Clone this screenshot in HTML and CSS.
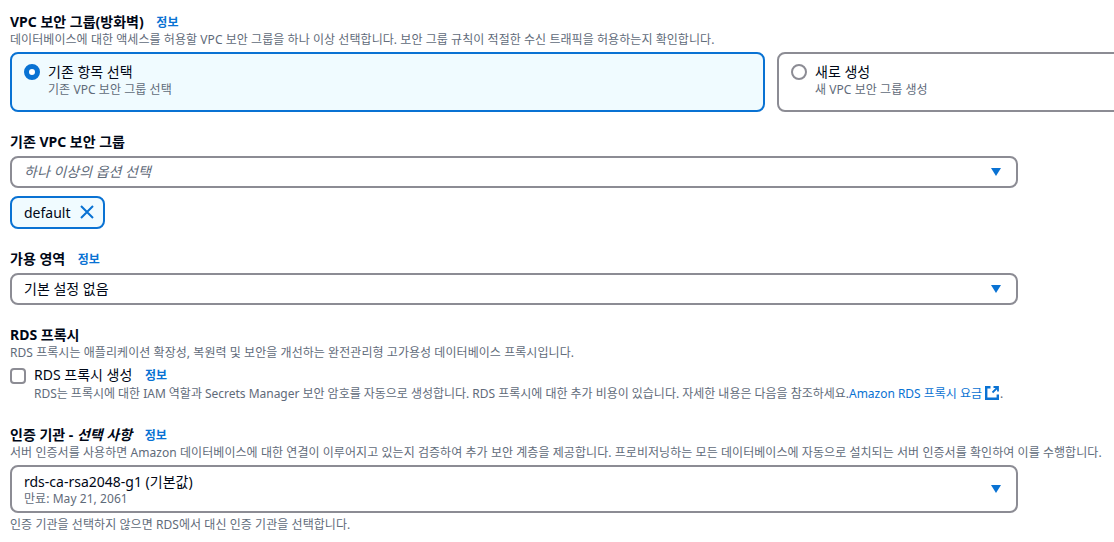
FILE: index.html
```html
<!DOCTYPE html>
<html lang="ko">
<head>
    <meta charset="UTF-8">
    <meta name="viewport" content="width=device-width, initial-scale=1.0">
    <title>VPC 보안 그룹</title>
    <link rel="stylesheet" href="styles.css">
</head>
<body>
    <div class="form">
        <section class="field field-vpc">
            <div class="label">VPC 보안 그룹(방화벽) <a class="info" href="#">정보</a></div>
            <div class="desc">데이터베이스에 대한 액세스를 허용할 VPC 보안 그룹을 하나 이상 선택합니다. 보안 그룹 규칙이 적절한 수신 트래픽을 허용하는지 확인합니다.</div>
            <div class="tiles">
                <div class="tile tile-on">
                    <span class="radio radio-on"></span>
                    <div>
                        <div class="tile-title">기존 항목 선택</div>
                        <div class="tile-sub">기존 VPC 보안 그룹 선택</div>
                    </div>
                </div>
                <div class="tile">
                    <span class="radio"></span>
                    <div>
                        <div class="tile-title">새로 생성</div>
                        <div class="tile-sub">새 VPC 보안 그룹 생성</div>
                    </div>
                </div>
            </div>
        </section>

        <section class="field field-existing">
            <div class="label">기존 VPC 보안 그룹</div>
            <div class="select">
                <span class="placeholder">하나 이상의 옵션 선택</span>
                <span class="caret"></span>
            </div>
            <div class="token">
                default
                <svg class="token-x" width="16" height="16" viewBox="0 0 16 16"><path d="M2 2l12 12M14 2L2 14" fill="none" stroke="#0972d3" stroke-width="2"/></svg>
            </div>
        </section>

        <section class="field field-az">
            <div class="label">가용 영역 <a class="info" href="#">정보</a></div>
            <div class="select">
                <span>기본 설정 없음</span>
                <span class="caret"></span>
            </div>
        </section>

        <section class="field field-proxy">
            <div class="label">RDS 프록시</div>
            <div class="desc desc-proxy">RDS 프록시는 애플리케이션 확장성, 복원력 및 보안을 개선하는 완전관리형 고가용성 데이터베이스 프록시입니다.</div>
            <div class="check-row">
                <span class="checkbox"></span>
                <div>
                    <div class="check-title">RDS 프록시 생성 <a class="info" href="#">정보</a></div>
                    <div class="desc desc-mixed">RDS는 프록시에 대한 IAM 역할과 Secrets Manager 보안 암호를 자동으로 생성합니다. RDS 프록시에 대한 추가 비용이 있습니다. 자세한 내용은 다음을 참조하세요.<a class="link" href="#">Amazon RDS 프록시 요금 <svg class="ext" width="16" height="16" viewBox="0 0 16 16"><path d="M6.5 2.2H2.2v11.6h11.6V9.5" fill="none" stroke="#0972d3" stroke-width="2.4"/><path d="M9.5 2h4.5v4.5M14 2L8.5 7.5" fill="none" stroke="#0972d3" stroke-width="1.8"/></svg></a>.</div>
                </div>
            </div>
        </section>

        <section class="field field-ca">
            <div class="label">인증 기관 - <i>선택 사항</i> <a class="info" href="#">정보</a></div>
            <div class="desc">서버 인증서를 사용하면 Amazon 데이터베이스에 대한 연결이 이루어지고 있는지 검증하여 추가 보안 계층을 제공합니다. 프로비저닝하는 모든 데이터베이스에 자동으로 설치되는 서버 인증서를 확인하여 이를 수행합니다.</div>
            <div class="select select-tall">
                <div>
                    <div class="select-value">rds-ca-rsa2048-g1 (기본값)</div>
                    <div class="tile-sub">만료: May 21, 2061</div>
                </div>
                <span class="caret"></span>
            </div>
            <div class="desc hint">인증 기관을 선택하지 않으면 RDS에서 대신 인증 기관을 선택합니다.</div>
        </section>
    </div>
</body>
</html>
```

FILE: styles.css
```css
html, body {
    margin: 0;
    height: 542px;
    overflow: hidden;
    background: #fff;
}
body {
    font-family: "Noto Sans", "Noto Sans CJK KR", sans-serif;
    font-size: 14px;
    line-height: 20px;
    color: #000716;
}
.form {
    padding: 12px 0 0 10px;
    width: 1008px;
}
.field-existing { margin-top: 20px; }
.field-existing .select { margin-top: 5px; }
.field-az { margin-top: 20px; }
.field-proxy { margin-top: 20px; }
.field-ca { margin-top: 23px; }
.label {
    font-weight: 700;
    font-size: 14px;
    line-height: 19px;
}
.info {
    margin-left: 9px;
    font-size: 12px;
    font-weight: 700;
    color: #0972d3;
    text-decoration: none;
}
.desc {
    font-size: 12px;
    line-height: 16px;
    letter-spacing: 0.06px;
    color: #5f6b7a;
    white-space: nowrap;
}
.desc-proxy {
    margin-top: 1px;
}
.desc-mixed {
    letter-spacing: -0.02px;
}
.tiles {
    display: flex;
    gap: 12px;
    margin-top: 4px;
    width: 1600px;
}
.tile {
    box-sizing: border-box;
    width: 755px;
    height: 60px;
    display: flex;
    gap: 8px;
    padding: 8px 12px;
    border: 2px solid #8c8c94;
    border-radius: 8px;
    background: #fff;
}
.tile-on {
    border-color: #0972d3;
    background: #f0fbff;
}
.radio {
    box-sizing: border-box;
    flex: none;
    width: 16px;
    height: 16px;
    margin-top: 2px;
    border: 2px solid #8c8c94;
    border-radius: 50%;
    background: #fff;
}
.radio-on {
    border: 5px solid #0972d3;
}
.tile-title {
    font-size: 14px;
    line-height: 20px;
}
.tile-sub {
    font-size: 12px;
    line-height: 16px;
    letter-spacing: 0.06px;
    color: #5f6b7a;
}
.select {
    box-sizing: border-box;
    display: flex;
    justify-content: space-between;
    align-items: center;
    height: 32px;
    margin-top: 4px;
    padding: 0 15px 0 12px;
    border: 2px solid #8c8c94;
    border-radius: 8px;
}
.select-tall {
    height: 48px;
}
.select-value {
    line-height: 19px;
}
.placeholder {
    font-style: italic;
    color: #5f6b7a;
}
.caret {
    flex: none;
    width: 0;
    height: 0;
    border-left: 5px solid transparent;
    border-right: 5px solid transparent;
    border-top: 8px solid #0972d3;
}
.token {
    box-sizing: border-box;
    display: flex;
    width: fit-content;
    align-items: center;
    gap: 8px;
    height: 33px;
    margin-top: 8px;
    padding: 0 8px 0 12px;
    border: 2px solid #0972d3;
    border-radius: 8px;
    background: #f0fbff;
}
.token-x {
    margin-bottom: 2px;
}
.check-row {
    display: flex;
    gap: 8px;
    margin-top: 4px;
}
.checkbox {
    box-sizing: border-box;
    flex: none;
    width: 16px;
    height: 16px;
    margin-top: 3px;
    border: 2px solid #8c8c94;
    border-radius: 4px;
}
.check-title {
    line-height: 19px;
}
.link {
    color: #0972d3;
    text-decoration: none;
}
.ext {
    margin-left: -1px;
    vertical-align: -3px;
}
.hint {
    margin-top: 4px;
}
```
